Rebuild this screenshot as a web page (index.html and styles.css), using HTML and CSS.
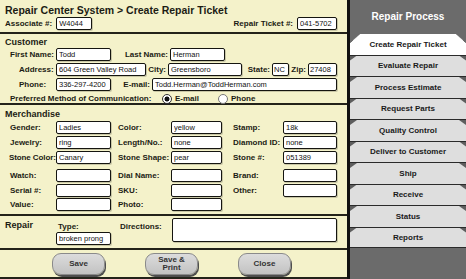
FILE: index.html
```html
<!DOCTYPE html>
<html>
<head>
  <meta charset="utf-8">
  <title>Create Repair Ticket</title>
  <link rel="stylesheet" href="styles.css">
</head>
<body>
  <div class="app">
    <div class="main">

      <div class="head">
        <h1 class="title">Repair Center System &gt; Create Repair Ticket</h1>
        <div class="head-row">
          <div class="pair">
            <label class="lab">Associate #:</label>
            <input class="fld w-assoc" value="W4044">
          </div>
          <div class="pair">
            <label class="lab">Repair Ticket #:</label>
            <input class="fld w-ticket" value="041-5702">
          </div>
        </div>
      </div>

      <div class="sec customer">
        <h2>Customer</h2>
        <div class="row">
          <label class="lab c1">First Name:</label>
          <input class="fld w55" value="Todd">
          <label class="lab r w59">Last Name:</label>
          <input class="fld w55" value="Herman">
        </div>
        <div class="row">
          <label class="lab c1 in">Address:</label>
          <input class="fld w90" value="604 Green Valley Road">
          <label class="lab r w22">City:</label>
          <input class="fld w74" value="Greensboro">
          <label class="lab r w30">State:</label>
          <input class="fld w17" value="NC">
          <label class="lab r w19">Zip:</label>
          <input class="fld w29" value="27408">
        </div>
        <div class="row">
          <label class="lab c1 in">Phone:</label>
          <input class="fld w55" value="336-297-4200">
          <label class="lab r w41">E-mail:</label>
          <input class="fld w185" value="Todd.Herman@ToddHerman.com">
        </div>
        <div class="row radio-row">
          <label class="lab pref">Preferred Method of Communication:</label>
          <input type="radio" name="pm" class="rad" checked>
          <span class="lab opt">E-mail</span>
          <input type="radio" name="pm" class="rad">
          <span class="lab opt">Phone</span>
        </div>
      </div>

      <div class="sec merch">
        <h2>Merchandise</h2>
        <div class="group">
          <div class="row">
            <label class="lab c1">Gender:</label>
            <input class="fld w55" value="Ladies">
            <label class="lab c2">Color:</label>
            <input class="fld w51" value="yellow">
            <label class="lab c3">Stamp:</label>
            <input class="fld w54" value="18k">
          </div>
          <div class="row">
            <label class="lab c1">Jewelry:</label>
            <input class="fld w55" value="ring">
            <label class="lab c2">Length/No.:</label>
            <input class="fld w51" value="none">
            <label class="lab c3">Diamond ID:</label>
            <input class="fld w54" value="none">
          </div>
          <div class="row">
            <label class="lab c1 tight">Stone Color:</label>
            <input class="fld w55" value="Canary">
            <label class="lab c2">Stone Shape:</label>
            <input class="fld w51" value="pear">
            <label class="lab c3">Stone #:</label>
            <input class="fld w54" value="051389">
          </div>
        </div>
        <div class="group second">
          <div class="row">
            <label class="lab c1">Watch:</label>
            <input class="fld w55">
            <label class="lab c2">Dial Name:</label>
            <input class="fld w51">
            <label class="lab c3">Brand:</label>
            <input class="fld w54">
          </div>
          <div class="row">
            <label class="lab c1">Serial #:</label>
            <input class="fld w55">
            <label class="lab c2">SKU:</label>
            <input class="fld w51">
            <label class="lab c3">Other:</label>
            <input class="fld w54">
          </div>
          <div class="row">
            <label class="lab c1">Value:</label>
            <input class="fld w55">
            <label class="lab c2">Photo:</label>
            <input class="fld w51">
          </div>
        </div>
      </div>

      <div class="sec repair">
        <h2 class="repair-title">Repair</h2>
        <div class="type-col">
          <label class="lab">Type:</label>
          <input class="fld w55" value="broken prong">
        </div>
        <label class="lab dir-lab">Directions:</label>
        <textarea class="fld dir"></textarea>
      </div>

      <div class="sec actions">
        <button class="btn">Save</button>
        <button class="btn">Save &amp;<br>Print</button>
        <button class="btn">Close</button>
      </div>

    </div>

    <div class="side">
      <div class="side-head">Repair Process</div>
      <div class="tabs">
        <div class="tab active">Create Repair Ticket</div>
        <div class="tab">Evaluate Repair</div>
        <div class="tab">Process Estimate</div>
        <div class="tab">Request Parts</div>
        <div class="tab">Quality Control</div>
        <div class="tab">Deliver to Customer</div>
        <div class="tab">Ship</div>
        <div class="tab">Receive</div>
        <div class="tab">Status</div>
        <div class="tab">Reports</div>
      </div>
    </div>
  </div>
</body>
</html>
```

FILE: styles.css
```css
* {
  box-sizing: border-box;
}

body {
  margin: 0;
  background: #6b6b6b;
  color: #1c1c14;
  font-family: "Liberation Sans", Arial, sans-serif;
}

.app {
  display: flex;
  width: 466px;
  height: 279px;
}

.main {
  width: 347px;
  height: 279px;
  background: #f4f2ca;
  display: flex;
  flex-direction: column;
}

h1, h2 {
  margin: 0;
}

/* header */

.head {
  height: 34px;
  border-bottom: 2px solid #23231a;
  padding: 4px 10px 0 5px;
}

.title {
  font-size: 10.5px;
  line-height: 13px;
  font-weight: bold;
}

.head-row {
  display: flex;
  justify-content: space-between;
  height: 13px;
}

.pair {
  display: flex;
  align-items: center;
  gap: 4px;
}

.w-assoc { width: 36px; }
.w-ticket { width: 40px; }

/* sections */

.sec {
  border-bottom: 2px solid #23231a;
}

.sec h2 {
  font-size: 9px;
  line-height: 12px;
  padding-left: 5px;
}

.customer {
  height: 71px;
  padding-top: 2px;
}

.merch {
  height: 111px;
  padding-top: 2px;
}

.merch h2 {
  line-height: 14px;
}

.row {
  display: flex;
  align-items: center;
  height: 13px;
  margin-bottom: 2px;
}

.group.second {
  margin-top: 5px;
}

.group.second .row {
  margin-bottom: 1.5px;
}

.lab {
  font-size: 8px;
  font-weight: bold;
  white-space: nowrap;
  flex-shrink: 0;
}

.lab.r {
  text-align: right;
  padding-right: 2px;
}

.c1 {
  width: 56px;
  padding-left: 10px;
}

.c1.in {
  padding-left: 19px;
}

.c1.tight {
  padding-left: 9px;
  letter-spacing: -0.1px;
}

.c2 {
  width: 60px;
  padding-left: 7px;
}

.c3 {
  width: 61px;
  padding-left: 11px;
}

.w19 { width: 19px; }
.w22 { width: 22px; }
.w30 { width: 30px; }
.w41 { width: 41px; }
.w59 { width: 59px; }

/* inputs */

.fld {
  flex-shrink: 0;
  height: 13px;
  margin: 0;
  padding: 0 2px;
  border: 1px solid #151510;
  border-radius: 2px;
  background: #fff;
  box-shadow: 1px 1px 0 rgba(0, 0, 0, 0.18);
  font-family: "Liberation Sans", Arial, sans-serif;
  font-size: 7.5px;
  color: #111;
  outline: 0;
}

.w17 { width: 17px; padding: 0 1px; }
.w29 { width: 29px; padding: 0 1px; }
.w51 { width: 51px; }
.w54 { width: 54px; }
.w55 { width: 55px; }
.w74 { width: 74px; }
.w90 { width: 90px; }
.w185 { width: 185px; }

.radio-row {
  height: 11px;
  margin-top: 1px;
  margin-bottom: 0;
}

.pref {
  width: 162px;
  padding-left: 10px;
}

.rad {
  -webkit-appearance: none;
  appearance: none;
  width: 10px;
  height: 10px;
  margin: 0;
  border: 1px solid #777;
  border-radius: 50%;
  background: #fff;
  flex-shrink: 0;
}

.rad:checked {
  border-color: #333;
  background: radial-gradient(circle, #111 0 2.2px, #fff 2.8px);
}

.opt {
  font-weight: bold;
  margin-left: 3px;
  width: 43px;
}

/* repair */

.repair {
  height: 34px;
  display: flex;
  align-items: flex-start;
  padding-top: 2px;
}

.sec .repair-title {
  width: 56px;
  font-size: 9px;
  padding-top: 1px;
}

.type-col {
  width: 64px;
  display: flex;
  flex-direction: column;
  padding-top: 3px;
}

.type-col .lab {
  padding-left: 2px;
  line-height: 11px;
}

.dir-lab {
  width: 52px;
  padding-top: 3px;
  line-height: 11px;
}

.dir {
  width: 165px;
  height: 24px;
  resize: none;
}

/* buttons */

.actions {
  height: 29px;
  display: flex;
  gap: 40px;
  padding: 3px 0 0 52px;
}

.btn {
  width: 53px;
  height: 22px;
  padding: 0;
  border: 1px solid #8a8a8a;
  border-radius: 9px;
  background: linear-gradient(#dcdcdc, #c2c2c2);
  box-shadow: 1px 2px 0 #4e4e4e;
  font-family: "Liberation Sans", Arial, sans-serif;
  font-size: 8px;
  line-height: 8px;
  font-weight: bold;
  color: #333;
}

/* sidebar */

.side {
  flex: 1;
  border-left: 3px solid #111;
  background: #6b6b6b;
}

.side-head {
  height: 33px;
  display: flex;
  align-items: center;
  justify-content: center;
  color: #fff;
  font-size: 10px;
  font-weight: bold;
}

.tab {
  position: relative;
  height: 21.5px;
  display: flex;
  align-items: center;
  justify-content: center;
  border-top: 1px solid #2a2a2a;
  background: #dedede;
  color: #1a1a1a;
  font-size: 8px;
  font-weight: bold;
}

.tab:last-child {
  border-bottom: 1px solid #2a2a2a;
}

.tab::before,
.tab::after {
  content: "";
  position: absolute;
  top: 0;
  width: 7px;
  height: 5px;
  background: #5e5e5e;
}

.tab::before {
  left: 0;
  clip-path: polygon(0 0, 100% 0, 0 100%);
}

.tab::after {
  right: 0;
  clip-path: polygon(0 0, 100% 0, 100% 100%);
}

.tab.active {
  background: #fff;
  border-top-color: #6b6b6b;
}

.tab.active::before,
.tab.active::after {
  width: 10px;
  height: 9px;
  background: linear-gradient(to bottom right, #6b6b6b 48%, #222 49% 58%, transparent 60%);
}

.tab.active::after {
  background: linear-gradient(to bottom left, #6b6b6b 48%, #222 49% 58%, transparent 60%);
}
```
